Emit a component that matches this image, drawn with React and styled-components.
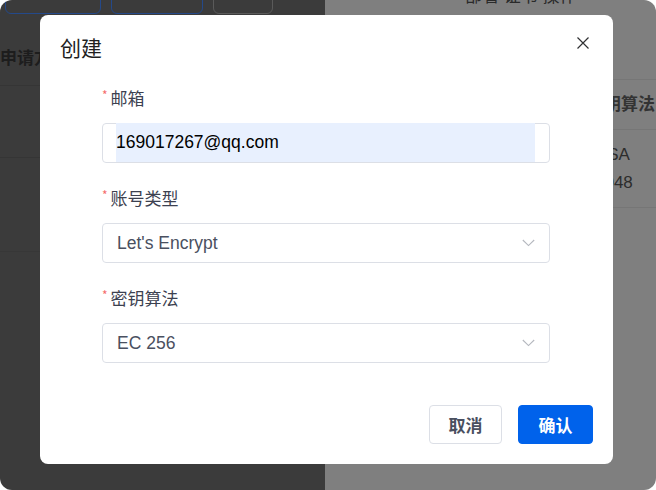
import styled, { createGlobalStyle } from "styled-components";

const GlobalStyle = createGlobalStyle`
html, body {
	margin: 0;
	padding: 0;
	background: #ffffff;
}
body {
	font-family: "Liberation Sans", "Noto Sans CJK SC", sans-serif;
}
`

const Frame = styled.div`
position: relative;
width: 656px;
height: 490px;
border-radius: 12px;
overflow: hidden;
display: grid;
grid-template-columns: 325px 1fr;
`

const LeftPane = styled.section`
background-color: #3b3b3b;
display: flex;
flex-direction: column;
`

const RightPane = styled.section`
background-color: #7f7f7f;
display: flex;
flex-direction: column;
`

const ButtonRow = styled.div`
display: flex;
gap: 10px;
padding-left: 5px;
margin-top: -19px;
`

const GhostButton = styled.div`
flex: none;
width: ${(p) => p.$w}px;
height: 33px;
border: 1px solid ${(p) => (p.$muted ? "#5a5a5a" : "#24498a")};
border-radius: 6px;
box-sizing: border-box;
`

const BgRow = styled.div`
flex: none;
height: ${(p) => p.$h}px;
border-bottom: 1px solid ${(p) => p.$line};
display: flex;
align-items: ${(p) => p.$align || "center"};
padding-left: ${(p) => p.$pad || 0}px;
padding-bottom: ${(p) => p.$pb || 0}px;
box-sizing: border-box;
font-family: "Liberation Sans", "Noto Sans CJK SC", sans-serif;
font-size: 17px;
font-weight: ${(p) => (p.$bold ? 700 : 400)};
color: ${(p) => p.$color || "#1d1d1d"};
line-height: 28px;
white-space: nowrap;
`

const Cell = styled.div`
display: flex;
flex-direction: column;
`

const Dialog = styled.div`
position: absolute;
left: 40px;
top: 15px;
width: 573px;
height: 449px;
background: #ffffff;
border-radius: 8px;
display: flex;
flex-direction: column;
box-sizing: border-box;
`

const Header = styled.header`
display: flex;
justify-content: space-between;
align-items: center;
padding: 18px 23px 0 20px;
height: 28px;
margin-bottom: 2px;
box-sizing: content-box;
`

const Title = styled.h2`
margin: 0;
font-family: "Noto Sans CJK SC", sans-serif;
font-size: 21px;
font-weight: 400;
color: #1f1f1f;
line-height: 28px;
`

const CloseButton = styled.button`
border: 0;
background: none;
padding: 0;
width: 14px;
height: 14px;
display: flex;
margin-top: -8px;
`

const Form = styled.form`
width: 448px;
margin: 22px 0 0 62px;
display: flex;
flex-direction: column;
gap: 22px;
`

const Field = styled.div`
display: flex;
flex-direction: column;
gap: 14px;
`

const Label = styled.label`
display: flex;
align-items: center;
gap: 3px;
height: 24px;
font-family: "Noto Sans CJK SC", sans-serif;
font-size: 17px;
color: #3c4150;
`

const Star = styled.span`
color: #f56c6c;
font-size: 12px;
margin-top: -5px;
`

const InputBox = styled.div`
height: 40px;
border: 1px solid #dcdfe6;
border-radius: 4px;
box-sizing: border-box;
padding: 0 14px;
display: flex;
align-items: center;
justify-content: space-between;
font-family: "Liberation Sans", "Noto Sans CJK SC", sans-serif;
font-size: 17.5px;
color: #4a5060;
`

const AutoFill = styled.div`
flex: 1;
align-self: stretch;
background: #e8f0fe;
color: #000;
display: flex;
align-items: center;
margin: -1px 0 0 -1px;
`

const Footer = styled.footer`
margin-top: auto;
display: flex;
justify-content: flex-end;
gap: 16px;
padding: 0 20px 20px;
`

const Button = styled.button`
height: 39px;
width: ${(p) => (p.$primary ? 75 : 73)}px;
border-radius: 4px;
border: 1px solid ${(p) => (p.$primary ? "#0062eb" : "#dcdfe6")};
background: ${(p) => (p.$primary ? "#0062eb" : "#ffffff")};
color: ${(p) => (p.$primary ? "#ffffff" : "#4a5060")};
font-family: "Noto Sans CJK SC", sans-serif;
font-size: 17px;
font-weight: 700;
`

function Chevron() {
	return (
		<svg width="13" height="8" viewBox="0 0 13 8">
			<path d="M0.8 1 L6.5 6.6 L12.2 1" fill="none" stroke="#b4b7be" strokeWidth="1.1" />
		</svg>
	);
}

function Field2({ label, children }) {
	return (
		<Field>
			<Label>
				<Star>*</Star>
				{label}
			</Label>
			{children}
		</Field>
	);
}

function App() {
	return (
		<>
			<GlobalStyle />
			<Frame>
				<LeftPane>
					<ButtonRow>
						<GhostButton $w={96} />
						<GhostButton $w={92} />
						<GhostButton $w={60} $muted />
					</ButtonRow>
					<BgRow $h={72} $line="#353535" $bold $align="flex-end" $pb={12}>申请方式</BgRow>
					<BgRow $h={72} $line="#353535" />
					<BgRow $h={94} $line="#373737" />
				</LeftPane>
				<RightPane>
					<BgRow $h={12} $line="transparent" $color="#2a2a2a" $pad={140} $align="flex-end">
						部署 证书 操作
					</BgRow>
					<BgRow $h={68} $line="#767676" />
					<BgRow $h={50} $line="#767676" $bold $color="#333" $pad={262}>
						密钥算法
					</BgRow>
					<BgRow $h={78} $line="#767676" $color="#2c2c2c" $pad={270}>
						<Cell>
							<span>RSA</span>
							<span>2048</span>
						</Cell>
					</BgRow>
				</RightPane>

				<Dialog>
					<Header>
						<Title>创建</Title>
						<CloseButton aria-label="close">
							<svg width="14" height="14" viewBox="0 0 14 14">
								<path d="M1.5 1.5 L12.5 12.5 M12.5 1.5 L1.5 12.5" stroke="#303133" strokeWidth="1.2" />
							</svg>
						</CloseButton>
					</Header>
					<Form>
						<Field2 label="邮箱">
							<InputBox>
								<AutoFill>169017267@qq.com</AutoFill>
							</InputBox>
						</Field2>
						<Field2 label="账号类型">
							<InputBox>
								<span>Let's Encrypt</span>
								<Chevron />
							</InputBox>
						</Field2>
						<Field2 label="密钥算法">
							<InputBox>
								<span>EC 256</span>
								<Chevron />
							</InputBox>
						</Field2>
					</Form>
					<Footer>
						<Button type="button">取消</Button>
						<Button type="button" $primary>确认</Button>
					</Footer>
				</Dialog>
			</Frame>
		</>
	);
}

export default App;
